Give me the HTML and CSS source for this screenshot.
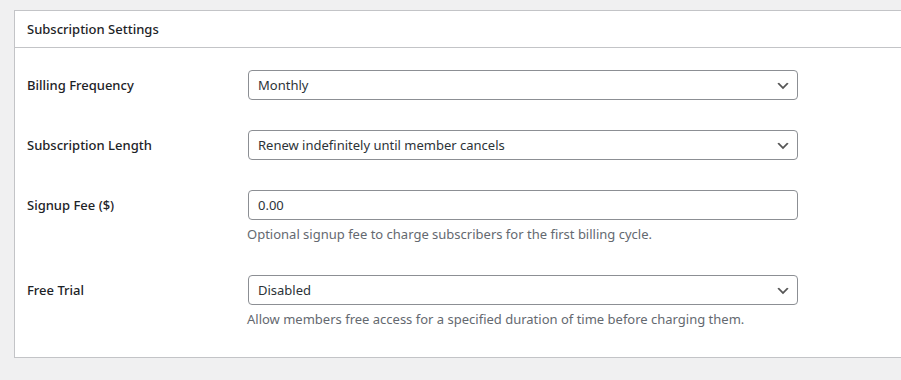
FILE: index.html
```html
<!DOCTYPE html>
<html>
<head>
<meta charset="utf-8">
<link rel="stylesheet" href="styles.css">
</head>
<body>
<div class="page">
  <div class="panel">
    <div class="panel-head"><h2>Subscription Settings</h2></div>
    <div class="panel-body">
      <div class="row">
        <div class="label">Billing Frequency</div>
        <div class="field">
          <div class="select"><span>Monthly</span><svg width="16" height="16" viewBox="0 0 20 20"><path d="M5 6l5 5 5-5 2 1-7 7-7-7 2-1z" fill="#555"/></svg></div>
        </div>
      </div>
      <div class="row">
        <div class="label">Subscription Length</div>
        <div class="field">
          <div class="select"><span>Renew indefinitely until member cancels</span><svg width="16" height="16" viewBox="0 0 20 20"><path d="M5 6l5 5 5-5 2 1-7 7-7-7 2-1z" fill="#555"/></svg></div>
        </div>
      </div>
      <div class="row">
        <div class="label">Signup Fee ($)</div>
        <div class="field">
          <div class="input">0.00</div>
          <p class="desc">Optional signup fee to charge subscribers for the first billing cycle.</p>
        </div>
      </div>
      <div class="row">
        <div class="label">Free Trial</div>
        <div class="field">
          <div class="select"><span>Disabled</span><svg width="16" height="16" viewBox="0 0 20 20"><path d="M5 6l5 5 5-5 2 1-7 7-7-7 2-1z" fill="#555"/></svg></div>
          <p class="desc">Allow members free access for a specified duration of time before charging them.</p>
        </div>
      </div>
    </div>
  </div>
</div>
</body>
</html>
```
FILE: styles.css
```css
html, body {
  margin: 0;
  padding: 0;
  background: #f0f0f1;
}
body {
  font-family: "Noto Sans", "Open Sans", sans-serif;
  color: #1d2327;
}
.page {
  height: 380px;
  overflow: hidden;
  padding: 10px 0 0 14px;
  box-sizing: border-box;
}
.panel {
  background: #fff;
  border: 1px solid #c3c4c7;
  margin-right: -20px;
}
.panel-head {
  border-bottom: 1px solid #c3c4c7;
  height: 36px;
  display: flex;
  align-items: center;
  padding: 0 12px;
}
.panel-head h2 {
  margin: 0;
  font-size: 13px;
  font-weight: 500;
}
.panel-body {
  padding: 7px 12px 12px;
}
.row {
  display: flex;
  padding: 15px 0;
}
.label {
  width: 221px;
  flex: none;
  font-size: 13px;
  font-weight: 500;
  line-height: 30px;
}
.field {
  width: 550px;
}
.select, .input {
  height: 30px;
  box-sizing: border-box;
  border: 1px solid #8c8f94;
  border-radius: 4px;
  display: flex;
  align-items: center;
  justify-content: space-between;
  padding: 0 6px 0 9px;
  font-size: 13px;
  color: #2c3338;
}
.select svg {
  margin-top: 2px;
}
.desc {
  margin: 4px 0 0;
  font-size: 13px;
  line-height: 21px;
  color: #646970;
  margin-left: -1px;
}
```
